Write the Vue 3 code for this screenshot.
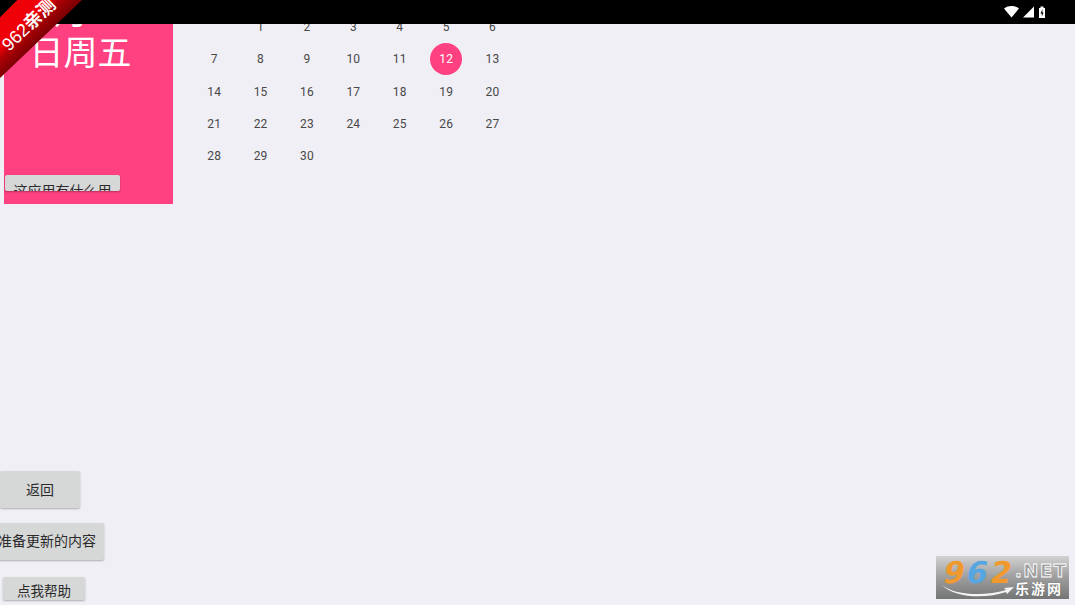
<script setup>
const weeks = [
  ['', 1, 2, 3, 4, 5, 6],
  [7, 8, 9, 10, 11, 12, 13],
  [14, 15, 16, 17, 18, 19, 20],
  [21, 22, 23, 24, 25, 26, 27],
  [28, 29, 30, '', '', '', '']
]
</script>

<template>
  <div class="screen">
    <div class="status">
      <svg class="status-icons" width="46" height="14" viewBox="0 0 46 14">
        <path d="M1 3.500C5 .2 12 .2 16 3.500L8.500 12.500Z" fill="#fff" />
        <path d="M20 12.500L31 1.500V12.500Z" fill="#fff" />
        <path d="M36 3H37.500V1.500H40.500V3H42V13H36Z" fill="#fff" />
        <path d="M39.500 4L37.500 8.500H38.800V11.500L40.600 7.500H39.300Z" fill="#000" />
      </svg>
    </div>

    <section class="top">
      <aside class="panel">
        <div class="date">6月12<br />日周五</div>
        <button class="btn btn-panel">这应用有什么用</button>
      </aside>
      <div class="calendar">
        <div v-for="(week, w) in weeks" :key="w" class="week">
          <span v-for="(day, d) in week" :key="d" class="day" :class="{ today: day === 12 }">{{ day }}</span>
        </div>
      </div>
    </section>

    <section class="actions">
      <button class="btn btn-back">返回</button>
      <button class="btn btn-update">准备更新的内容</button>
      <button class="btn btn-help">点我帮助</button>
    </section>

    <div class="ribbon"><span>962<b>亲测</b></span></div>

    <div class="logo">
      <svg class="swoosh" width="133" height="43" viewBox="0 0 133 43">
        <path d="M6 29C20 40 50 40 70 34L68 32L78 31L71 38L70 36C50 43 18 42 6 29Z" fill="#f4f4f4" />
      </svg>
      <span class="logo-num"><i class="o">9</i><i class="b">6</i><i class="o">2</i></span>
      <span class="logo-side">
        <span class="logo-net">.NET</span>
        <span class="logo-cn">乐游网</span>
      </span>
    </div>
  </div>
</template>

<style>
html, body { margin: 0; background: #f0eff5; }
</style>

<style scoped>
.screen {
  position: relative;
  width: 1075px;
  height: 605px;
  overflow: hidden;
  background: #f0eff5;
  display: flex;
  flex-direction: column;
  justify-content: space-between;
  font-family: Roboto, "Noto Sans CJK SC", sans-serif;
}
.status {
  position: absolute;
  z-index: 2;
  inset: 0 0 auto 0;
  height: 24px;
  background: #000;
}
.status-icons { position: absolute; left: 1003px; top: 5px; }
.top { display: flex; align-items: flex-start; padding-left: 4px; }
.panel {
  box-sizing: border-box;
  width: 169px;
  height: 204px;
  background: #ff4081;
  display: flex;
  flex-direction: column;
  justify-content: space-between;
  padding: 0 0 13px 1px;
}
.date {
  margin-top: -11px;
  font-size: 34px;
  line-height: 41px;
  color: #fff;
  text-align: center;
  padding-right: 17px;
  font-family: "Noto Sans CJK SC", sans-serif;
}
.btn {
  display: block;
  border: 0;
  padding: 0;
  border-radius: 2px;
  background: #d6d7d7;
  color: #2b2b2b;
  font-family: "Noto Sans CJK SC", sans-serif;
  font-size: 14px;
  box-shadow: 0 1px 2px rgba(0, 0, 0, .28);
  overflow: hidden;
  white-space: nowrap;
}
.btn-panel { width: 115px; height: 16px; line-height: 26px; padding-top: 2px; box-sizing: border-box; }
.calendar { margin-left: 18px; margin-top: 10.800px; }
.week { display: flex; height: 32.300px; align-items: center; }
.day {
  width: 46.400px;
  height: 32px;
  line-height: 32px;
  text-align: center;
  font-size: 12px;
  color: #484848;
  letter-spacing: .2px;
}
.today { position: relative; color: #fff; z-index: 0; }
.today::before {
  content: "";
  position: absolute;
  z-index: -1;
  left: 7.200px;
  top: 0;
  width: 32px;
  height: 32px;
  border-radius: 50%;
  background: #ff4081;
}
.actions { display: flex; flex-direction: column; align-items: flex-start; padding-bottom: 5px; }
.btn-back { width: 80px; height: 37px; margin-bottom: 15px; padding-bottom: 2px; }
.btn-update { width: 114px; height: 37px; margin-left: -10px; margin-bottom: 17px; padding-bottom: 4px; }
.btn-help { width: 82px; height: 23px; margin-left: 3px; font-size: 13.500px; line-height: 26px; padding-bottom: 2px; box-sizing: border-box; }
.ribbon {
  position: absolute;
  z-index: 3;
  left: 0;
  top: 0;
  width: 82px;
  height: 78px;
  clip-path: polygon(0 0, 100% 0, 0 100%);
  background: linear-gradient(135deg, #000 10.500%, #ee0008 11.200%, #f00008 30%, #b00006 37%, #7e0003 49%);
}
.ribbon span {
  position: absolute;
  left: -8px;
  top: 13px;
  width: 72px;
  transform: rotate(-44deg);
  text-align: center;
  font: 400 18px/20px "Liberation Sans", "Noto Sans CJK SC", sans-serif;
  color: #fff;
  white-space: nowrap;
}
.ribbon b { font: 700 18px/20px "Noto Sans CJK SC", sans-serif; }
.logo {
  position: absolute;
  z-index: 1;
  left: 936px;
  top: 556px;
  width: 133px;
  height: 43px;
  box-sizing: border-box;
  display: flex;
  padding-left: 8px;
  overflow: hidden;
  background: linear-gradient(#d2d2d2, #a2a2a2 45%, #747575);
}
.swoosh { position: absolute; left: 0; top: 0; }
.logo-num {
  position: relative;
  width: 71px;
  font: 700 30px/33px "DejaVu Sans", sans-serif;
  letter-spacing: 2.500px;
}
.logo-num i { font-style: normal; display: inline-block; transform: skewX(-12deg); }
.o { color: #f0992c; }
.b { color: #56a6e2; }
.logo-side { position: relative; display: flex; flex-direction: column; }
.logo-net {
  font: 700 18px/18px "DejaVu Sans", sans-serif;
  color: #a0a0a0;
  letter-spacing: 1.500px;
  margin-top: 6px;
  -webkit-text-stroke: .8px #fff;
}
.logo-cn {
  font: 700 14px/17px "Noto Sans CJK SC", sans-serif;
  color: #fff;
  letter-spacing: 2px;
  text-shadow: 0 0 1px #555;
}
</style>
